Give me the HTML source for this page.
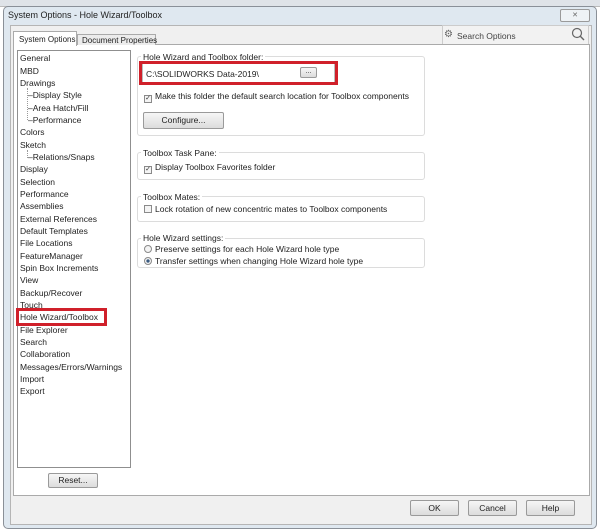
<!DOCTYPE html>
<html><head><style>
*{margin:0;padding:0;box-sizing:border-box}
body{width:600px;height:532px;overflow:hidden;background:#fff;font-family:"Liberation Sans",sans-serif;font-size:8.5px;color:#222;position:relative;white-space:nowrap}
.a{position:absolute}
.btn{position:absolute;border:1px solid #9a9a9a;border-radius:2px;background:linear-gradient(#f6f6f6,#dcdcdc);text-align:center;font-size:8.5px}
.grp{position:absolute;border:1px solid #dcdcdc;border-radius:3px}
.gt{position:absolute;background:#fff;padding:0 2px}
.cb{display:inline-block;width:8px;height:8px;border:1px solid #8a8a8a;background:#f4f4f4;vertical-align:-1px;margin-right:3px;font-size:7px;line-height:6px;text-align:center;color:#333}
.rd{display:inline-block;width:8px;height:8px;border:1px solid #8a8a8a;border-radius:50%;background:#f4f4f4;vertical-align:-1px;margin-right:3px}
.li{position:absolute;left:20px}
</style></head><body>
<div class="a" style="left:0;top:0;width:600px;height:7px;background:#dfe3e8;border-bottom:1px solid #bbb"></div>
<div class="a" style="left:3px;top:6px;width:594px;height:523px;background:#dfe8f0;border:1px solid #8a9098;border-radius:5px"></div>
<div class="a" style="left:8px;top:10px;font-size:9px;color:#222">System Options - Hole Wizard/Toolbox</div>
<div class="btn" style="left:560px;top:9px;width:30px;height:13px;font-size:7px;line-height:11px;color:#666;background:#eef2f5">✕</div>
<div class="a" style="left:10px;top:25px;width:582px;height:500px;background:#f0f0f0;border:1px solid #b5b5b5"></div>
<div class="a" style="left:442px;top:25px;width:147px;height:20px;background:#f2f2f2;border:1px solid #ccc"></div>
<div class="a" style="left:444px;top:29px;font-size:10px;color:#666">⚙</div>
<div class="a" style="left:457px;top:31px;color:#444">Search Options</div>
<svg class="a" style="left:571px;top:27px" width="14" height="14"><circle cx="6" cy="6" r="4.5" fill="none" stroke="#666" stroke-width="1.2"/><line x1="9.3" y1="9.3" x2="13" y2="13" stroke="#666" stroke-width="1.4"/></svg>
<div class="a" style="left:13px;top:44px;width:577px;height:452px;background:#fff;border:1px solid #aaa"></div>
<div class="a" style="left:13px;top:31px;width:64px;height:15px;background:#fff;border:1px solid #aaa;border-bottom:none;padding:3px 0 0 5px;font-size:8px">System Options</div>
<div class="a" style="left:77px;top:34px;width:79px;height:11px;background:#ececec;border:1px solid #aaa;border-bottom:none;padding:1px 0 0 4px;font-size:8px">Document Properties</div>
<div class="a" style="left:17px;top:50px;width:114px;height:418px;border:1px solid #8f8f8f;background:#fff"></div>
<div class="a" style="left:27px;top:88px;width:5px;height:32px;border-left:1px dotted #999"></div>
<div class="a" style="left:27px;top:150px;width:5px;height:8px;border-left:1px dotted #999"></div>
<div class="li" style="top:53px">General</div>
<div class="li" style="top:65.5px">MBD</div>
<div class="li" style="top:78px">Drawings</div>
<div class="li" style="top:90px;left:28px">–Display Style</div>
<div class="li" style="top:102.5px;left:28px">–Area Hatch/Fill</div>
<div class="li" style="top:115px;left:28px">–Performance</div>
<div class="li" style="top:127px">Colors</div>
<div class="li" style="top:139.5px">Sketch</div>
<div class="li" style="top:152px;left:28px">–Relations/Snaps</div>
<div class="li" style="top:164px">Display</div>
<div class="li" style="top:176.5px">Selection</div>
<div class="li" style="top:189px">Performance</div>
<div class="li" style="top:201px">Assemblies</div>
<div class="li" style="top:213.5px">External References</div>
<div class="li" style="top:226px">Default Templates</div>
<div class="li" style="top:238px">File Locations</div>
<div class="li" style="top:250.5px">FeatureManager</div>
<div class="li" style="top:263px">Spin Box Increments</div>
<div class="li" style="top:275px">View</div>
<div class="li" style="top:287.5px">Backup/Recover</div>
<div class="li" style="top:300px">Touch</div>
<div class="li" style="top:312px">Hole Wizard/Toolbox</div>
<div class="li" style="top:324.5px">File Explorer</div>
<div class="li" style="top:337px">Search</div>
<div class="li" style="top:349px">Collaboration</div>
<div class="li" style="top:361.5px">Messages/Errors/Warnings</div>
<div class="li" style="top:374px">Import</div>
<div class="li" style="top:386px">Export</div>
<div class="a" style="left:16px;top:308px;width:91px;height:18px;border:3px solid #d0202a"></div>
<div class="btn" style="left:48px;top:473px;width:50px;height:15px;line-height:13px">Reset...</div>

<div class="grp" style="left:137px;top:56px;width:288px;height:80px"></div>
<div class="gt" style="left:141px;top:52px">Hole Wizard and Toolbox folder:</div>
<div class="a" style="left:142px;top:63px;width:193px;height:20px;border:1px solid #bbb"></div>
<div class="a" style="left:146px;top:69px">C:\SOLIDWORKS Data-2019\</div>
<div class="btn" style="left:300px;top:67px;width:17px;height:11px;line-height:7px;font-size:7px">...</div>
<div class="a" style="left:139px;top:61px;width:199px;height:24px;border:3px solid #d0202a"></div>
<div class="a" style="left:144px;top:91px"><span class="cb">✓</span>Make this folder the default search location for Toolbox components</div>
<div class="btn" style="left:143px;top:112px;width:81px;height:17px;line-height:15px">Configure...</div>

<div class="grp" style="left:137px;top:152px;width:288px;height:28px"></div>
<div class="gt" style="left:141px;top:148px">Toolbox Task Pane:</div>
<div class="a" style="left:144px;top:162px"><span class="cb">✓</span>Display Toolbox Favorites folder</div>

<div class="grp" style="left:137px;top:196px;width:288px;height:26px"></div>
<div class="gt" style="left:141px;top:192px">Toolbox Mates:</div>
<div class="a" style="left:144px;top:204px"><span class="cb"></span>Lock rotation of new concentric mates to Toolbox components</div>

<div class="grp" style="left:137px;top:238px;width:288px;height:30px"></div>
<div class="gt" style="left:141px;top:233px">Hole Wizard settings:</div>
<div class="a" style="left:144px;top:244px"><span class="rd"></span>Preserve settings for each Hole Wizard hole type</div>
<div class="a" style="left:144px;top:256px"><span class="rd" style="background:radial-gradient(#3a5a80 35%,#f4f4f4 45%)"></span>Transfer settings when changing Hole Wizard hole type</div>

<div class="btn" style="left:410px;top:500px;width:49px;height:16px;line-height:14px">OK</div>
<div class="btn" style="left:468px;top:500px;width:49px;height:16px;line-height:14px">Cancel</div>
<div class="btn" style="left:526px;top:500px;width:49px;height:16px;line-height:14px">Help</div>
</body></html>
